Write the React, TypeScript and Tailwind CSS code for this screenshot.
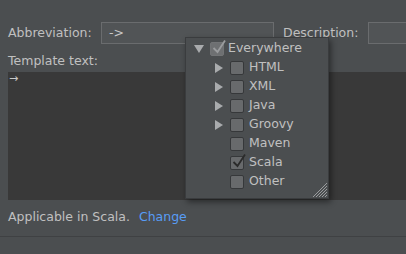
import React from "react";

type Item = { label: string; arrow?: boolean; checked?: boolean };

const items: Item[] = [
  { label: "HTML", arrow: true },
  { label: "XML", arrow: true },
  { label: "Java", arrow: true },
  { label: "Groovy", arrow: true },
  { label: "Maven" },
  { label: "Scala", checked: true },
  { label: "Other" },
];

const Check = ({ checked, dim }: { checked?: boolean; dim?: boolean }) => (
  <span
    className={`relative shrink-0 inline-block w-[14px] h-[14px] rounded-[2px] border ${
      dim ? "border-[#727476] bg-[#6e7072]" : "border-[#36383a] bg-[#686a6c]"
    }`}
  >
    {checked && (
      <svg className="absolute -top-[4px] left-[0px]" width="16" height="16" viewBox="0 0 16 16">
        <path
          d="M2.5 9 L6.5 13 L14 1.5"
          fill="none"
          stroke={dim ? "#9a9c9e" : "#2b2b2b"}
          strokeWidth="1.8"
        />
      </svg>
    )}
  </span>
);

const Arrow = ({ down }: { down?: boolean }) => (
  <svg width="10" height="10" viewBox="0 0 10 10">
    {down ? <path d="M0 1 H10 L5 9 Z" fill="#a9abad" /> : <path d="M1 0 V10 L9 5 Z" fill="#a9abad" />}
  </svg>
);

export default function App() {
  return (
    <div
      className="relative w-[406px] h-[254px] overflow-hidden bg-[#4b4e50] text-[#c0c0c0] text-[12.5px]"
      style={{ fontFamily: '"DejaVu Sans", sans-serif' }}
    >
      <div className="flex items-center pt-[22px] pl-[8px]">
        <span className="w-[93px] shrink-0">Abbreviation:</span>
        <div className="w-[173px] shrink-0 h-[22px] border border-[#6a6c6e] bg-[#515456] flex items-center pl-[7px] text-[#c8c8c8]">
          -&gt;
        </div>
        <span className="ml-[9px] w-[85px] shrink-0">Description:</span>
        <div className="w-[60px] shrink-0 h-[22px] border border-[#6a6c6e] bg-[#515456]" />
      </div>
      <div className="pl-[8px] mt-[9px] leading-[16px]">Template text:</div>
      <div className="ml-[8px] mt-[3px] h-[128px] bg-[#393939] text-[#c8c8c8] text-[11px] leading-[14px] pl-[1px]">
        →
      </div>
      <div className="pl-[8px] mt-[8px] flex">
        <span>Applicable in Scala.</span>
        <span className="ml-[9px] text-[#589df6]">Change</span>
      </div>
      <div className="absolute left-0 right-0 top-[236px] border-t border-[#3f4143]" />

      <div className="absolute left-[185px] top-[37px] w-[144px] h-[162px] bg-[#4b4e50] border border-[#3a3c3e] shadow-[2px_3px_6px_rgba(0,0,0,0.45)] pt-[1px]">
        <div className="flex items-center h-[19px] pl-[2px]">
          <span className="w-[22px] flex justify-center">
            <Arrow down />
          </span>
          <Check checked dim />
          <span className="ml-[4px]">Everywhere</span>
        </div>
        {items.map((it) => (
          <div key={it.label} className="flex items-center h-[19px] pl-[21px]">
            <span className="w-[23px] flex justify-center">{it.arrow && <Arrow />}</span>
            <Check checked={it.checked} />
            <span className="ml-[5px]">{it.label}</span>
          </div>
        ))}
        <svg className="absolute right-[1px] bottom-[1px]" width="14" height="14" viewBox="0 0 14 14">
          <path d="M14 0 L0 14 M14 3 L3 14 M14 6 L6 14 M14 9 L9 14 M14 12 L12 14" stroke="#9a9c9e" strokeWidth="1" />
        </svg>
      </div>
    </div>
  );
}
